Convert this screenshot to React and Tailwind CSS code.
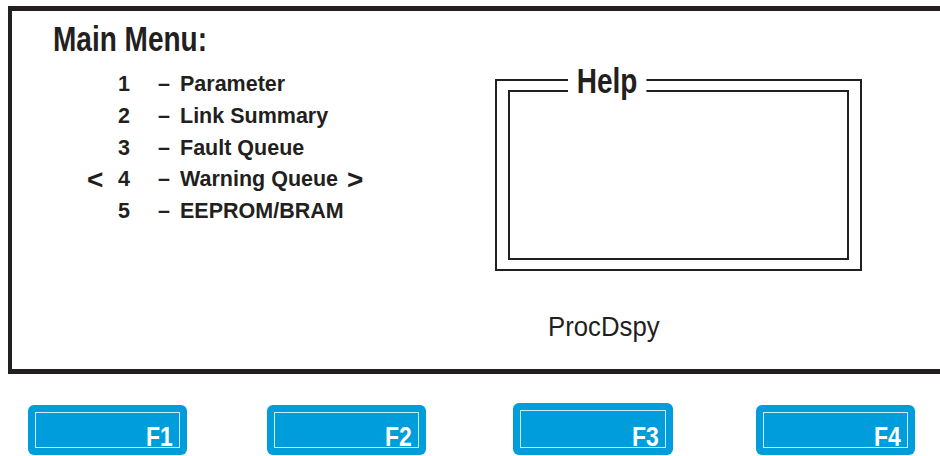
const sans = { fontFamily: '"Liberation Sans", Arial, sans-serif' };

const items = [
  { n: "1", label: "Parameter" },
  { n: "2", label: "Link Summary" },
  { n: "3", label: "Fault Queue" },
  { n: "4", label: "Warning Queue", selected: true },
  { n: "5", label: "EEPROM/BRAM" },
];

function FKey({ label, className }) {
  return (
    <div className={"h-[50px] w-[159px] rounded-[6px] bg-[#009ddc] p-[7px] " + (className || "")}>
      <div className="flex h-full items-end justify-end border border-[#cdeaf7] pr-[6px]">
        <span
          className="inline-block origin-right scale-x-[0.82] text-[28px] font-bold leading-[20px] text-white"
          style={sans}
        >
          {label}
        </span>
      </div>
    </div>
  );
}

export default function App() {
  return (
    <div className="h-[456px] w-[940px] overflow-hidden bg-white text-[#231f20]" style={sans}>
      {/* LCD panel */}
      <div className="ml-[8px] mt-[6px] h-[368px] w-[940px] border-y-[5px] border-l-[4px] border-[#231f20]">
        <div className="flex">
          {/* Left: main menu */}
          <div className="w-[483px] pl-[41px] pt-[10px]">
            <div className="w-fit origin-left scale-x-[0.8] text-[35px] font-bold leading-none">
              Main Menu:
            </div>
            <div className="mt-[13px] text-[21.5px] font-bold leading-[31.75px]">
              {items.map((it) => (
                <div key={it.n} className="flex items-center">
                  <span className="w-[65px] pl-[34px] text-[28px]">{it.selected ? "<" : ""}</span>
                  <span className="w-[40px]">{it.n}</span>
                  <span className="w-[22px]">–</span>
                  <span>{it.label}</span>
                  {it.selected && <span className="ml-[9px] text-[28px]">&gt;</span>}
                </div>
              ))}
            </div>
          </div>

          {/* Right: help window */}
          <div className="pt-[68px]">
            <div className="relative h-[192px] w-[367px] border-2 border-[#231f20] px-[11px] pb-[9px] pt-[9px]">
              <div className="h-full w-full border-2 border-[#231f20]" />
              <span className="absolute left-[71px] top-[-18px] inline-block origin-left scale-x-[0.8] bg-white px-[11px] text-[35px] font-bold leading-none">
                Help
              </span>
            </div>
            <div className="ml-[53px] mt-[42px] w-fit origin-left scale-x-[0.92] text-[28px] leading-none">
              ProcDspy
            </div>
          </div>
        </div>
      </div>

      {/* Function keys */}
      <div className="mt-[29px] flex items-end">
        <FKey label="F1" className="ml-[28px]" />
        <FKey label="F2" className="ml-[80px]" />
        <FKey label="F3" className="ml-[87px] h-[52px] w-[160px]" />
        <FKey label="F4" className="ml-[83px]" />
      </div>
    </div>
  );
}
